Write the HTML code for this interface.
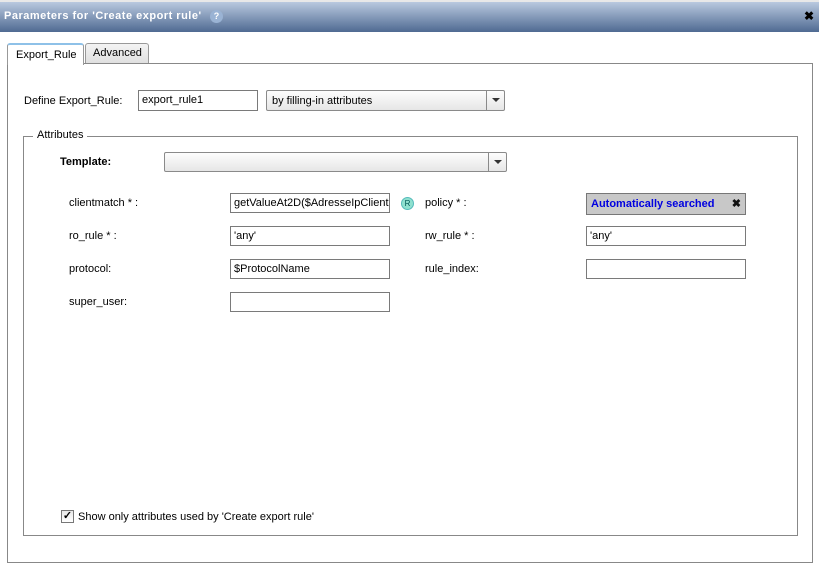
<!DOCTYPE html>
<html><head><style>
*{box-sizing:border-box;margin:0;padding:0}
body{width:819px;height:552px;overflow:hidden;background:#fff;font-family:"Liberation Sans",sans-serif;font-size:11px;color:#000;position:relative}
.a{position:absolute}
.inp{position:absolute;border:1px solid #7a7a7a;background:#fff;height:20px;padding:3px 3px;font-size:11px;white-space:nowrap;overflow:hidden}
.lbl{position:absolute;font-size:11px}
.sel{position:absolute;border:1px solid #8a8a8a;border-radius:2px;background:linear-gradient(#fdfdfd,#e6e6e6);height:20px}
.arr{position:absolute;right:0;top:0;width:18px;height:18px;border-left:1px solid #8a8a8a}
.arr:after{content:"";position:absolute;left:5px;top:7px;border:4px solid transparent;border-top:4px solid #333;border-bottom:0}
</style></head><body>
<div class="a" style="left:0;top:0;width:819px;height:3px;background:#e8e8e8"></div>
<div class="a" style="left:0;top:2px;width:819px;height:30px;background:linear-gradient(#b9c9df,#4f6a92)"></div>
<div class="a" style="left:4px;top:10px;color:#fff;font-weight:bold;font-size:11px;letter-spacing:0.5px">Parameters for 'Create export rule'</div>
<div class="a" style="left:210px;top:10px;width:13px;height:13px;border-radius:50%;background:#9ab3d4;color:#fff;font-size:9px;font-weight:bold;text-align:center;line-height:13px">?</div>
<div class="a" style="left:804px;top:9px;color:#000;font-weight:bold;font-size:12px">✖</div>

<div class="a" style="left:7px;top:63px;width:806px;height:500px;border:1px solid #888"></div>
<div class="a" style="left:7px;top:43px;width:77px;height:22px;border:1px solid #999;border-bottom:none;border-top:2px solid #8ec1e8;border-radius:3px 3px 0 0;background:#fff;padding:4px 0 0 8px">Export_Rule</div>
<div class="a" style="left:85px;top:43px;width:64px;height:20px;border:1px solid #999;border-bottom:none;border-radius:3px 3px 0 0;background:linear-gradient(#f4f4f4,#e0e0e0);padding:3px 0 0 7px">Advanced</div>

<div class="lbl" style="left:24px;top:95px">Define Export_Rule:</div>
<div class="inp" style="left:138px;top:90px;width:120px;height:21px">export_rule1</div>
<div class="sel" style="left:266px;top:90px;width:239px;height:21px"><span class="a" style="left:5px;top:4px">by filling-in attributes</span><div class="arr" style="height:19px"></div></div>

<div class="a" style="left:23px;top:136px;width:775px;height:400px;border:1px solid #888"></div>
<div class="a" style="left:33px;top:129px;background:#fff;padding:0 4px">Attributes</div>

<div class="lbl" style="left:60px;top:156px;font-weight:bold">Template:</div>
<div class="sel" style="left:164px;top:152px;width:343px"><div class="arr"></div></div>

<div class="lbl" style="left:69px;top:197px">clientmatch * :</div>
<div class="inp" style="left:230px;top:193px;width:160px">getValueAt2D($AdresseIpClient</div>
<div class="a" style="left:401px;top:197px;width:13px;height:13px;border-radius:50%;background:#8fe0cf;border:1px solid #5bb;font-size:8px;text-align:center;line-height:11px;color:#055">R</div>
<div class="lbl" style="left:425px;top:197px">policy * :</div>
<div class="a" style="left:586px;top:193px;width:160px;height:22px;border:1px solid #777;background:#c8c8c8;padding:4px 4px;color:#0000e0;font-weight:bold">Automatically searched<span style="position:absolute;right:4px;top:3px;color:#111">✖</span></div>

<div class="lbl" style="left:69px;top:230px">ro_rule * :</div>
<div class="inp" style="left:230px;top:226px;width:160px">'any'</div>
<div class="lbl" style="left:425px;top:230px">rw_rule * :</div>
<div class="inp" style="left:586px;top:226px;width:160px">'any'</div>

<div class="lbl" style="left:69px;top:263px">protocol:</div>
<div class="inp" style="left:230px;top:259px;width:160px">$ProtocolName</div>
<div class="lbl" style="left:425px;top:263px">rule_index:</div>
<div class="inp" style="left:586px;top:259px;width:160px"></div>

<div class="lbl" style="left:69px;top:296px">super_user:</div>
<div class="inp" style="left:230px;top:292px;width:160px"></div>

<div class="a" style="left:61px;top:510px;width:13px;height:13px;border:1px solid #777;background:linear-gradient(#e8e8e8,#fff);font-size:11px;line-height:11px;text-align:center;font-weight:bold">✓</div>
<div class="lbl" style="left:78px;top:511px">Show only attributes used by 'Create export rule'</div>
</body></html>
